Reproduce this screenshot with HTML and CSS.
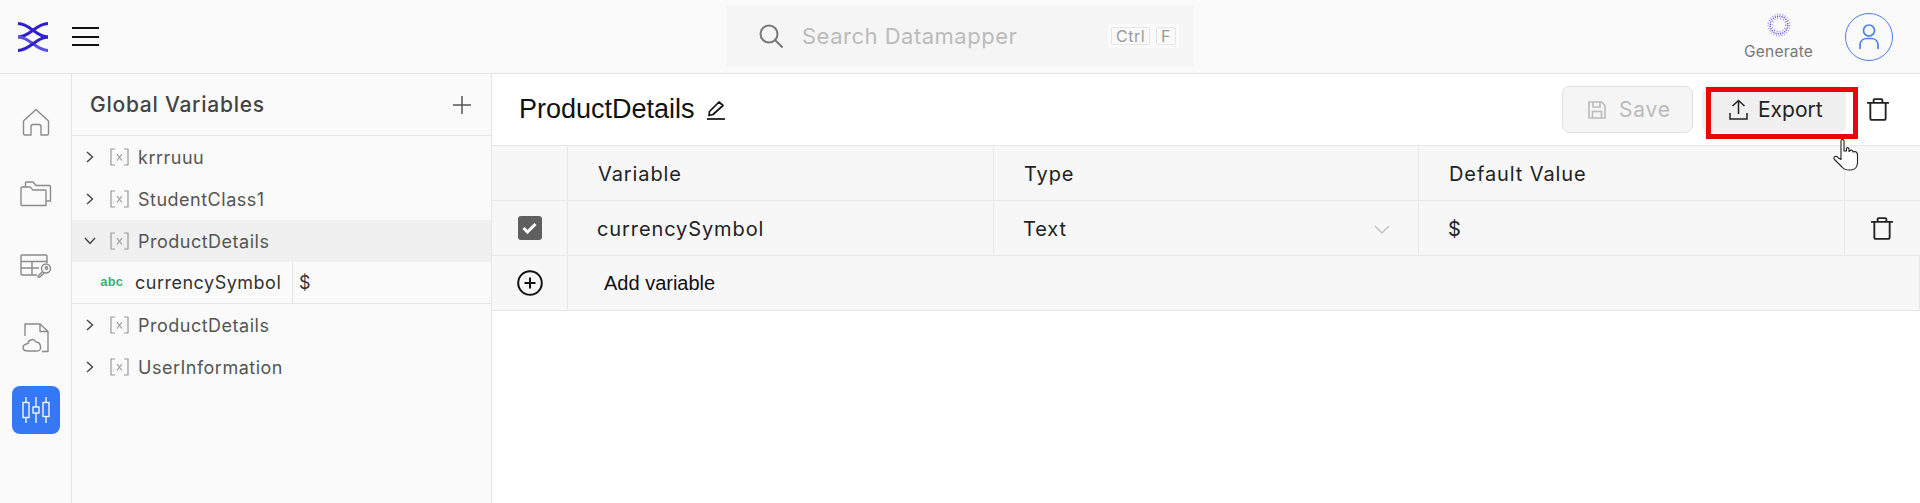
FILE: index.html
```html
<!DOCTYPE html>
<html lang="en">
<head>
    <meta charset="UTF-8">
    <meta name="viewport" content="width=device-width, initial-scale=1.0">
    <title>Datamapper - Global Variables</title>
    <link rel="stylesheet" href="styles.css">
</head>
<body>
    <svg class="sprites" width="0" height="0">
        <symbol id="chev-right" viewBox="0 0 8 12"><path d="M1 1L6.500 6L1 11" fill="none" stroke="#444" stroke-width="1.400"/></symbol>
        <symbol id="chev-down" viewBox="0 0 12 8"><path d="M1 1L6 6.500L11 1" fill="none" stroke="#444" stroke-width="1.400"/></symbol>
        <symbol id="var-x" viewBox="0 0 19 18"><path d="M5 1H1V17H5M14 1H18V17H14M7 6L12 12.500M12 6L7 12.500" fill="none" stroke="#999" stroke-width="1.200"/></symbol>
        <symbol id="trash" viewBox="0 0 20 21"><path d="M0 4.500H20M6 4.500V2Q6 1 7 1H13Q14 1 14 2V4.500M3 4.500V18.500Q3 20 4.500 20H15.500Q17 20 17 18.500V4.500" fill="none" stroke="#222" stroke-width="1.700"/></symbol>
    </svg>

    <header class="topbar">
        <div class="brand">
            <svg width="30" height="30" viewBox="0 0 30 30" fill="none" stroke="#2f1fcc" stroke-width="3">
                <path d="M0 1.500C12 1.500 18 15 30 15"/>
                <path d="M30 1.500C18 1.500 12 15 0 15"/>
                <path d="M0 15C12 15 18 28.500 30 28.500" stroke="#5a4fe0"/>
                <path d="M30 15C18 15 12 28.500 0 28.500"/>
            </svg>
            <div class="burger"><span></span><span></span><span></span></div>
        </div>
        <div class="search">
            <svg width="24" height="24" viewBox="0 0 24 24" fill="none" stroke="#777" stroke-width="2">
                <circle cx="10" cy="10" r="8.500"/>
                <path d="M16 16L23.500 23.500"/>
            </svg>
            <span class="search-text">Search Datamapper</span>
            <span class="keys"><kbd>Ctrl</kbd><kbd>F</kbd></span>
        </div>
        <div class="top-actions">
            <div class="generate">
                <svg width="24" height="24" viewBox="0 0 24 24" fill="none" stroke="#5b45d6">
                    <circle cx="12" cy="12" r="10.800" stroke-width="1.400" stroke-dasharray="1 1.700" opacity=".55"/>
                    <circle cx="12" cy="12" r="8.800" stroke-width="1.500" stroke-dasharray="1.200 1.100" opacity=".9"/>
                    <circle cx="12" cy="12" r="6.800" stroke-width="1.300" stroke-dasharray="1 2" opacity=".65"/>
                </svg>
                <span>Generate</span>
            </div>
            <div class="avatar">
                <svg width="24" height="26" viewBox="0 0 24 26" fill="none" stroke="#4a7ff5" stroke-width="1.700">
                    <circle cx="12" cy="6.500" r="5.500"/>
                    <path d="M3 25V21C3 16.500 6.500 14.500 10 14.500H14C17.500 14.500 21 16.500 21 21V25"/>
                </svg>
            </div>
        </div>
    </header>

    <div class="layout">
        <nav class="rail">
            <a class="rail-item">
                <svg width="28" height="28" viewBox="0 0 28 28" fill="none" stroke="#8a8a8a" stroke-width="1.400" stroke-linejoin="round">
                    <path d="M1.500 13L14 1.500L26.500 13V25.500Q26.500 27 25 27H19V19Q19 16.500 17 16.500H11Q9 16.500 9 19V27H3Q1.500 27 1.500 25.500Z"/>
                </svg>
            </a>
            <a class="rail-item">
                <svg width="32" height="26" viewBox="0 0 32 26" fill="none" stroke="#8a8a8a" stroke-width="1.400" stroke-linejoin="round">
                    <path d="M1 7Q1 6 2 6H10L13 9H25Q26 9 26 10V24.500H2Q1 24.500 1 23.500Z"/>
                    <path d="M5.500 6V2Q5.500 1 6.500 1H13L16 4.500H29.500Q30.500 4.500 30.500 5.500V20H26"/>
                </svg>
            </a>
            <a class="rail-item">
                <svg width="32" height="24" viewBox="0 0 32 24" fill="none" stroke="#8a8a8a" stroke-width="1.400" stroke-linejoin="round">
                    <path d="M17 21H2Q1 21 1 20V2Q1 1 2 1H26Q27 1 27 2V9"/>
                    <path d="M1 7.500H27M1 14H19M12 7.500V21"/>
                    <circle cx="26" cy="14.500" r="4.500"/>
                    <circle cx="26.500" cy="14" r="1.200"/>
                    <path d="M22.800 17.500L18 22Q17.500 23.500 19.500 23.300L24 19.200"/>
                </svg>
            </a>
            <a class="rail-item">
                <svg width="28" height="30" viewBox="0 0 28 30" fill="none" stroke="#8a8a8a" stroke-width="1.400" stroke-linejoin="round">
                    <path d="M3 13V1H18L26 8.500V28.500H20"/>
                    <path d="M18 1V8.500H26"/>
                    <path d="M6 28H15Q19 28 18.500 23.500Q18 19 14 19Q12 15.500 8.500 17Q6 18 6 20.500Q1 21.500 1 24.500Q1 28 6 28Z"/>
                </svg>
            </a>
            <a class="rail-item active">
                <svg width="28" height="28" viewBox="0 0 28 28" fill="none" stroke="#fff" stroke-width="1.300">
                    <rect x="1" y="6.500" width="6" height="15"/>
                    <path d="M4 1V6.500M4 21.500V27"/>
                    <rect x="11" y="11" width="6" height="6"/>
                    <path d="M14 1V11M14 17V27"/>
                    <rect x="21" y="6.500" width="6" height="14"/>
                    <path d="M24 1V6.500M24 20.500V27"/>
                </svg>
            </a>
        </nav>

        <aside class="panel">
            <div class="panel-head">
                <span class="panel-title">Global Variables</span>
                <svg width="20" height="20" viewBox="0 0 20 20" stroke="#555" stroke-width="1.500"><path d="M10 1V19M1 10H19"/></svg>
            </div>
            <div class="tree-row">
                <svg class="chev" width="8" height="12"><use href="#chev-right"/></svg>
                <svg class="var-icon" width="19" height="18"><use href="#var-x"/></svg>krrruuu
            </div>
            <div class="tree-row">
                <svg class="chev" width="8" height="12"><use href="#chev-right"/></svg>
                <svg class="var-icon" width="19" height="18"><use href="#var-x"/></svg>StudentClass1
            </div>
            <div class="tree-row open">
                <svg class="chev" width="12" height="8"><use href="#chev-down"/></svg>
                <svg class="var-icon" width="19" height="18"><use href="#var-x"/></svg>ProductDetails
            </div>
            <div class="tree-child">
                <span class="child-name"><span class="abc">abc</span>currencySymbol</span>
                <span class="child-value">$</span>
            </div>
            <div class="tree-row">
                <svg class="chev" width="8" height="12"><use href="#chev-right"/></svg>
                <svg class="var-icon" width="19" height="18"><use href="#var-x"/></svg>ProductDetails
            </div>
            <div class="tree-row">
                <svg class="chev" width="8" height="12"><use href="#chev-right"/></svg>
                <svg class="var-icon" width="19" height="18"><use href="#var-x"/></svg>UserInformation
            </div>
        </aside>

        <main class="main">
            <div class="title-row">
                <h1>ProductDetails</h1>
                <svg width="18" height="20" viewBox="0 0 18 20" fill="none" stroke="#111" stroke-width="1.700" stroke-linejoin="round">
                    <path d="M2.500 11.500L12 2L16 5.500L6 14.500L2 15.500Z"/>
                    <path d="M0 19H18"/>
                </svg>
                <div class="title-actions">
                    <button class="btn save">
                        <svg width="18" height="18" viewBox="0 0 18 18" fill="none" stroke="#bbb" stroke-width="1.600">
                            <path d="M1 1H13.500L17 4.500V17H1Z"/>
                            <path d="M5 1V6H12V1M4.500 17V10.500H13.500V17"/>
                        </svg>
                        Save
                    </button>
                    <button class="btn export">
                        <svg width="19" height="21" viewBox="0 0 19 21" fill="none" stroke="#222" stroke-width="1.500">
                            <path d="M9.500 15V1.500M3.500 7L9.500 1.500L15.500 7"/>
                            <path d="M1 14V20H18V14"/>
                        </svg>
                        Export
                    </button>
                    <svg class="trash" width="22" height="23"><use href="#trash"/></svg>
                </div>
            </div>

            <div class="grid-table">
                <div class="cell"></div>
                <div class="cell head">Variable</div>
                <div class="cell head">Type</div>
                <div class="cell head">Default Value</div>
                <div class="cell"></div>

                <div class="cell center"><span class="check">
                    <svg width="15" height="12" viewBox="0 0 15 12" fill="none" stroke="#fff" stroke-width="3"><path d="M1.500 6L5.500 10L13.500 2"/></svg>
                </span></div>
                <div class="cell value">currencySymbol</div>
                <div class="cell value type-cell">Text
                    <svg width="16" height="9" viewBox="0 0 16 9" fill="none" stroke="#bbb" stroke-width="1.200"><path d="M1 1L8 8L15 1"/></svg>
                </div>
                <div class="cell value">$</div>
                <div class="cell center trash-cell"><svg width="22" height="23"><use href="#trash"/></svg></div>

                <div class="cell center">
                    <svg width="26" height="26" viewBox="0 0 26 26" fill="none" stroke="#111" stroke-width="2">
                        <circle cx="13" cy="13" r="11.800"/>
                        <path d="M13 7.500V18.500M7.500 13H18.500"/>
                    </svg>
                </div>
                <div class="cell add">Add variable</div>
            </div>
        </main>
    </div>

    <div class="highlight"></div>
    <svg class="pointer" width="26" height="32" viewBox="0 0 26 32" fill="#fff" stroke="#222" stroke-width="1.100" stroke-linejoin="round">
        <path d="M8 2Q8 0.500 9.500 0.500Q11 0.500 11 2V12L13.500 12V9Q15.500 8 16 10V12.500L18 11Q20 11 20 13L22 12.500Q24.500 13 24.500 16V24Q24 30.500 18 31Q12 31.500 9 28L1.500 20.500Q0 18.500 2 17.500Q4 17 5.500 19L8 20.500Z"/>
    </svg>
</body>
</html>
```

FILE: styles.css
```css
* {
    box-sizing: border-box;
}

body {
    margin: 0;
    height: 503px;
    overflow: hidden;
    background-color: #fff;
    color: #222;
    font-family: 'Inter', 'Open Sans', sans-serif;
    position: relative;
}

svg {
    display: block;
    flex: none;
}

.sprites {
    position: absolute;
}

/* top bar */
.topbar {
    height: 74px;
    background-color: #fafafa;
    border-bottom: 1px solid #e6e6e6;
    display: grid;
    grid-template-columns: 1fr 468px 1fr;
    align-items: center;
}

.brand {
    display: flex;
    align-items: center;
    gap: 24px;
    padding-left: 18px;
}

.burger {
    width: 27px;
    display: flex;
    flex-direction: column;
    gap: 6.5px;
}

.burger span {
    height: 2px;
    background-color: #111;
}

.search {
    height: 60px;
    margin-top: -1px;
    background-color: #f5f5f5;
    display: flex;
    align-items: center;
    padding: 0 15px 0 33px;
    gap: 19px;
}

.search-text {
    color: #bbb;
    font-size: 22px;
    letter-spacing: 0.5px;
    flex: 1;
}

.keys {
    display: flex;
    gap: 6px;
    padding: 3px;
    background-color: #fafafa;
}

.keys kbd {
    font-family: 'Inter', sans-serif;
    font-size: 16px;
    line-height: 16px;
    letter-spacing: 0.5px;
    color: #999;
    padding: 0 4px;
    border: 1px solid #e6e6e6;
    border-radius: 2px;
}

.top-actions {
    display: flex;
    justify-content: flex-end;
    align-items: center;
    padding-right: 27px;
    gap: 32px;
}

.generate {
    display: flex;
    flex-direction: column;
    align-items: center;
    gap: 5px;
    color: #777;
    font-size: 15.5px;
    letter-spacing: 0.2px;
}

.avatar {
    width: 48px;
    height: 48px;
    border: 1.5px solid #4a7ff5;
    border-radius: 50%;
    display: flex;
    align-items: center;
    justify-content: center;
}

/* page columns */
.layout {
    height: 429px;
    display: grid;
    grid-template-columns: 72px 420px 1fr;
}

.rail {
    background-color: #fafafa;
    border-right: 1px solid #e6e6e6;
    display: flex;
    flex-direction: column;
    align-items: center;
    padding-top: 24px;
    gap: 24px;
}

.rail-item {
    width: 48px;
    height: 48px;
    display: flex;
    align-items: center;
    justify-content: center;
    border-radius: 8px;
}

.rail-item.active {
    background-color: #3478f6;
}

.panel {
    background-color: #fafafa;
    border-right: 1px solid #e6e6e6;
}

.panel-head {
    height: 62px;
    border-bottom: 1px solid #e6e6e6;
    display: flex;
    align-items: center;
    justify-content: space-between;
    padding: 0 19px 0 18px;
}

.panel-title {
    font-size: 21px;
    font-weight: 500;
    letter-spacing: 0.75px;
    color: #444;
}

.tree-row {
    height: 42px;
    display: flex;
    align-items: center;
    font-size: 18px;
    letter-spacing: 0.5px;
    color: #555;
    padding-left: 14px;
}

.tree-row .chev {
    margin-right: 16px;
}

.tree-row.open {
    background-color: #f0f0f0;
}

.tree-row.open .chev {
    margin-left: -2px;
    margin-right: 14px;
}

.var-icon {
    margin-right: 9px;
}

.tree-child {
    height: 42px;
    border-bottom: 1px solid #e6e6e6;
    display: flex;
    font-size: 18px;
    letter-spacing: 0.5px;
    color: #333;
}

.child-name {
    width: 221px;
    border-right: 1px solid #e6e6e6;
    display: flex;
    align-items: center;
    padding-left: 28px;
}

.abc {
    color: #3cb179;
    font-family: 'Liberation Mono', monospace;
    font-size: 13px;
    font-weight: 700;
    letter-spacing: 0;
    width: 35px;
}

.child-value {
    display: flex;
    align-items: center;
    padding-left: 6px;
}

/* main area */
.title-row {
    height: 71px;
    display: flex;
    align-items: center;
    padding-left: 27px;
    gap: 12px;
}

.title-row h1 {
    margin: 0;
    font-family: 'Liberation Sans', Arial, sans-serif;
    font-size: 27px;
    font-weight: 400;
    color: #111;
}

.title-actions {
    margin-left: auto;
    display: flex;
    align-items: center;
    padding-right: 31px;
}

.btn {
    height: 47px;
    border-radius: 8px;
    font-family: 'Inter', sans-serif;
    font-size: 21px;
    display: flex;
    align-items: center;
    padding: 0;
}

.btn.save {
    width: 131px;
    padding-left: 25px;
    gap: 13px;
    letter-spacing: 0.8px;
    background-color: #f5f5f5;
    border: 1px solid #e0e0e0;
    color: #bbb;
}

.btn.export {
    width: 144px;
    margin-left: 9px;
    padding-left: 27px;
    gap: 10px;
    background-color: #f0f0f0;
    border: 0;
    color: #222;
}

.trash {
    margin-left: 21px;
}

.grid-table {
    display: grid;
    grid-template-columns: 76px 426px 425px 426px 1fr;
    grid-auto-rows: 55px;
    background-color: #f7f7f7;
    border-top: 1px solid #e8e8e8;
    font-size: 20px;
    letter-spacing: 0.9px;
    color: #222;
}

.cell {
    border-right: 1px solid #e8e8e8;
    border-bottom: 1px solid #e8e8e8;
    display: flex;
    align-items: center;
}

.cell:nth-child(5n) {
    border-right: 0;
}

.head {
    padding-left: 30px;
    padding-top: 2px;
}

.value {
    padding-left: 29px;
    padding-top: 2px;
}

.center {
    justify-content: center;
}

.trash-cell {
    padding-right: 2px;
}

.type-cell {
    justify-content: space-between;
    padding-right: 28px;
}

.check {
    width: 24px;
    height: 24px;
    border-radius: 3px;
    background-color: #5f5f5f;
    display: flex;
    align-items: center;
    justify-content: center;
}

.add {
    grid-column: 2 / 6;
    padding-left: 36px;
    border-right: 1px solid #e8e8e8;
    font-family: 'Liberation Sans', Arial, sans-serif;
    font-size: 20px;
    letter-spacing: 0;
    color: #111;
}

/* annotation on top of the screenshot */
.highlight {
    position: absolute;
    left: 1706px;
    top: 87px;
    width: 152px;
    height: 52px;
    border: 5px solid #e80808;
}

.pointer {
    position: absolute;
    left: 1833px;
    top: 139px;
}
```
